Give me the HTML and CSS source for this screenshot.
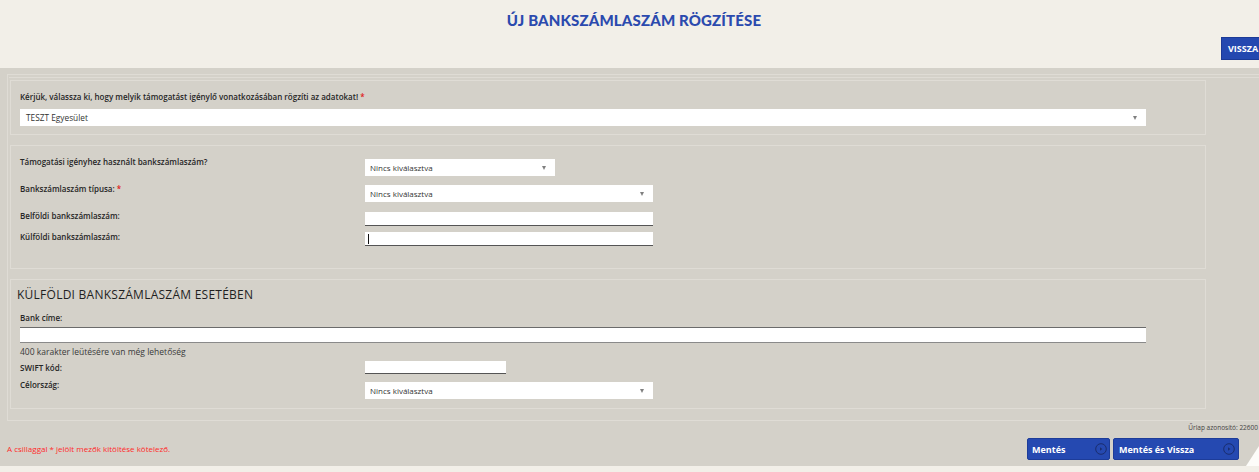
FILE: index.html
```html
<!DOCTYPE html>
<html lang="hu">
<head>
<meta charset="utf-8">
<title>Új bankszámlaszám rögzítése</title>
<link rel="stylesheet" href="styles.css">
</head>
<body>
<header class="page-header">
  <h1 class="page-title">ÚJ BANKSZÁMLASZÁM RÖGZÍTÉSE</h1>
  <div class="header-actions">
    <a class="btn-back" href="#">VISSZA</a>
  </div>
</header>

<main class="content">
  <div class="panel">
    <div class="panel-inner">
      <section class="box box-first">
        <div class="label">Kérjük, válassza ki, hogy melyik támogatást igénylő vonatkozásában rögzíti az adatokat! <span class="req">*</span></div>
        <div class="select select-wide"><span class="select-text">TESZT Egyesület</span><span class="caret-down"></span></div>
      </section>

      <section class="box box-second">
        <div class="row row-sel1">
          <div class="label">Támogatási igényhez használt bankszámlaszám?</div>
          <div class="select select-short"><span class="select-text">Nincs kiválasztva</span><span class="caret-down"></span></div>
        </div>
        <div class="row row-sel2">
          <div class="label">Bankszámlaszám típusa: <span class="req">*</span></div>
          <div class="select select-mid"><span class="select-text">Nincs kiválasztva</span><span class="caret-down"></span></div>
        </div>
        <div class="row row-in1">
          <div class="label">Belföldi bankszámlaszám:</div>
          <div class="input input-mid"></div>
        </div>
        <div class="row row-in2">
          <div class="label">Külföldi bankszámlaszám:</div>
          <div class="input input-mid input-focus"><span class="text-cursor"></span></div>
        </div>
      </section>

      <section class="box box-third">
        <h2 class="box-title">KÜLFÖLDI BANKSZÁMLASZÁM ESETÉBEN</h2>
        <div class="label label-bank">Bank címe:</div>
        <div class="input input-wide input-area"></div>
        <div class="counter">400 karakter leütésére van még lehetőség</div>
        <div class="row row-swift">
          <div class="label">SWIFT kód:</div>
          <div class="input input-short"></div>
        </div>
        <div class="row row-country">
          <div class="label">Célország:</div>
          <div class="select select-mid"><span class="select-text">Nincs kiválasztva</span><span class="caret-down"></span></div>
        </div>
      </section>
    </div>
  </div>

  <div class="form-id">Űrlap azonosító: 22600</div>

  <div class="footer-row">
    <div class="required-note">A csillaggal * jelölt mezők kitöltése kötelező.</div>
    <div class="actions">
      <a class="btn-save" href="#"><span>Mentés</span>
        <svg class="btn-icon" viewBox="0 0 12 12" width="12" height="12"><circle cx="6" cy="6" r="5.3" fill="none" stroke="#1a2d6e" stroke-width="1"/><path d="M5 4.2 L7.4 6 L5 7.8 Z" fill="#1a2d6e"/></svg>
      </a>
      <a class="btn-save btn-save-back" href="#"><span>Mentés és Vissza</span>
        <svg class="btn-icon" viewBox="0 0 12 12" width="12" height="12"><circle cx="6" cy="6" r="5.3" fill="none" stroke="#1a2d6e" stroke-width="1"/><path d="M5 4.2 L7.4 6 L5 7.8 Z" fill="#1a2d6e"/></svg>
      </a>
    </div>
    <svg class="corner-peek" viewBox="0 0 13 20" width="13" height="20" aria-hidden="true"><polygon points="13,0 13,20 0,20" fill="#fdfcf9"/></svg>
  </div>
</main>
<div class="page-bottom"></div>
</body>
</html>
```

FILE: styles.css
```css
html, body {
  margin: 0;
  padding: 0;
  overflow: hidden;
}

body {
  background: #f2efe8;
  font-family: "Open Sans", "Liberation Sans", sans-serif;
  color: #2b2b2b;
  width: 1259px;
}

.page-header {
  height: 68px;
  background: #f2efe8;
  display: flex;
  flex-direction: column;
  box-sizing: border-box;
  padding-top: 10px;
}

.page-title {
  margin: 0;
  text-align: center;
  font-family: "Lato", "Liberation Sans", sans-serif;
  font-weight: 900;
  font-size: 15px;
  line-height: 20px;
  letter-spacing: 0.15px;
  color: #2b4aae;
  padding-left: 9px;
}

.header-actions {
  display: flex;
  justify-content: flex-end;
  margin-top: 7px;
  margin-right: -32px;
}

.btn-back {
  display: block;
  background: #2448b0;
  border: 1px solid #1c3a96;
  color: #fff;
  text-decoration: none;
  font-weight: 700;
  font-size: 9px;
  line-height: 21px;
  height: 21px;
  padding: 0 6px;
  width: 56px;
}

.content {
  background: #d4d1c9;
  height: 398px;
  box-sizing: border-box;
  padding-top: 6px;
}

.panel {
  margin-left: 7px;
  border: 1px solid #dfdcd5;
  border-right: none;
  padding-top: 2px;
  height: 347px;
  box-sizing: border-box;
}

.panel-inner {
  border-top: 1px solid #dfdcd5;
  margin-left: 1px;
  padding: 2px 0 0 1px;
}

.box {
  width: 1196px;
  box-sizing: border-box;
  border: 1px solid #dfdcd5;
  padding-left: 9px;
}

.box-first {
  height: 55px;
  padding-top: 10px;
}

.box-second {
  margin-top: 10px;
  height: 124px;
  padding-top: 13px;
}

.box-third {
  margin-top: 10px;
  height: 130px;
  padding-top: 7px;
}

.label {
  font-size: 8px;
  font-weight: 600;
  color: #262626;
  line-height: 12px;
}

.req {
  color: #e02020;
}

.select {
  background: #fff;
  height: 17px;
  display: flex;
  align-items: center;
  justify-content: space-between;
  box-sizing: border-box;
  padding: 0 9px 0 5px;
  font-size: 8px;
  color: #333;
}

.select-wide {
  width: 1126px;
  margin-top: 6px;
  padding-left: 6px;
  font-size: 8.3px;
}

.select-short { width: 190px; }
.select-mid { width: 288px; }

.caret-down {
  width: 0;
  height: 0;
  border-left: 2.5px solid transparent;
  border-right: 2.5px solid transparent;
  border-top: 4px solid #808080;
}

.row {
  display: grid;
  grid-template-columns: 345px auto;
  align-items: start;
  justify-content: start;
}

.row-sel1 .label { margin-top: -3px; }
.row-sel2 { margin-top: 9px; }
.row-in1 { margin-top: 10px; }
.row-in2 { margin-top: 6px; }

.row-sel2 .label { margin-top: -2px; }
.row-in1 .label { margin-top: -2px; }
.row-in2 .label { margin-top: -1px; }

.input {
  background: #fff;
  height: 14px;
  box-sizing: border-box;
  border-bottom: 1px solid #555;
  position: relative;
}

.input-mid { width: 288px; }
.input-short { width: 141px; height: 13px; }
.input-wide {
  width: 1126px;
  height: 16px;
  border-top: 1px solid #6b6b6b;
  border-bottom: 1px solid #8a8a8a;
}

.text-cursor {
  position: absolute;
  left: 3px;
  top: 2px;
  width: 1px;
  height: 10px;
  background: #111;
}

.box-title {
  margin: 0 0 0 -3px;
  font-size: 12px;
  font-weight: 500;
  color: #1f1f1f;
  line-height: 16px;
  letter-spacing: 0.25px;
}

.label-bank {
  margin-top: 9px;
}

.input-area {
  margin-top: 3px;
}

.counter {
  font-size: 8.5px;
  color: #3a3a3a;
  line-height: 12px;
  margin-top: 3px;
}

.row-swift { margin-top: 3px; }
.row-swift .label { margin-top: 1px; }
.row-country { margin-top: 8px; }
.row-country .label { margin-top: -3px; }

.form-id {
  text-align: right;
  font-size: 6.5px;
  color: #444;
  margin-right: 1px;
  margin-top: 2px;
  line-height: 10px;
}

.footer-row {
  display: flex;
  align-items: flex-start;
  margin-top: 5px;
  padding-right: 20px;
  position: relative;
}

.required-note {
  color: #ff2a2a;
  font-size: 8px;
  margin-left: 7px;
  margin-top: 6px;
  line-height: 10px;
  flex: 1;
}

.actions {
  display: flex;
  gap: 3px;
  flex-shrink: 0;
}

.btn-save {
  display: flex;
  align-items: center;
  justify-content: space-between;
  width: 83px;
  height: 22px;
  box-sizing: border-box;
  background: #2549b1;
  border: 1px solid #1d3c99;
  border-radius: 2px;
  color: #fff;
  text-decoration: none;
  font-weight: 700;
  font-size: 9px;
  padding: 0 2px 0 4px;
}

.btn-save-back {
  width: 126px;
  padding-left: 5px;
  padding-right: 3px;
}

.btn-icon {
  display: block;
}

.corner-peek {
  position: absolute;
  right: 0;
  top: 8px;
  z-index: 2;
}

.page-bottom {
  height: 6px;
  background: #f2efe8;
}
```
